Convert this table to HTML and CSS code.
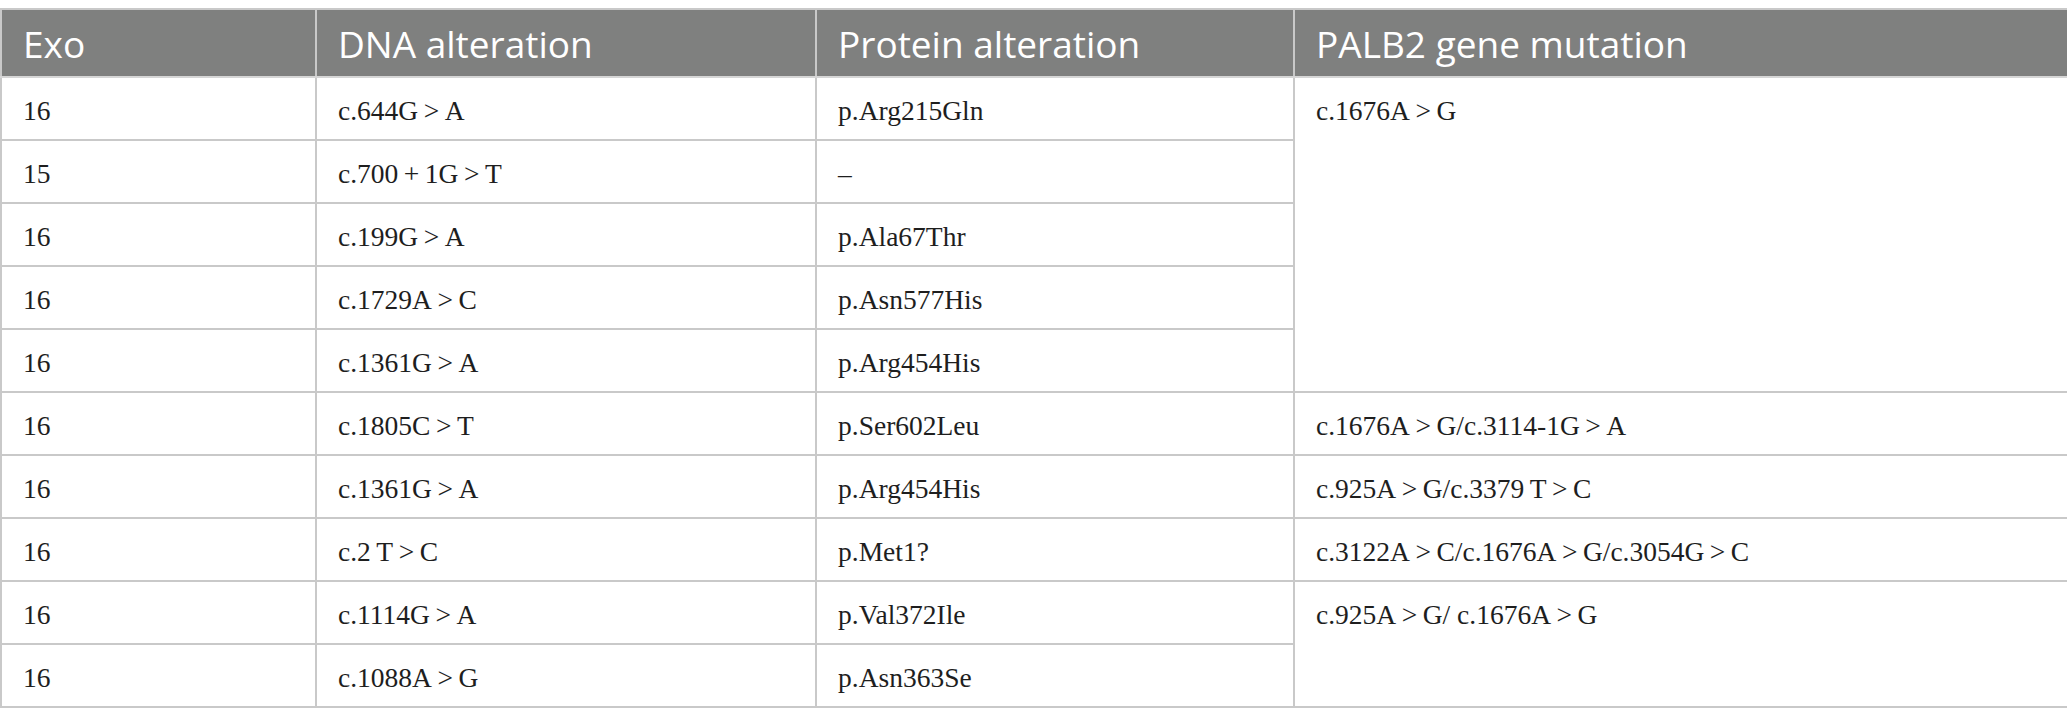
FILE: index.html
```html
<!DOCTYPE html>
<html lang="en">
<head>
<meta charset="utf-8">
<title>PALB2 mutations</title>
<link rel="stylesheet" href="styles.css">
</head>
<body>
<table class="data">
  <colgroup>
    <col class="c1"><col class="c2"><col class="c3"><col class="c4">
  </colgroup>
  <thead>
    <tr>
      <th>Exo</th>
      <th>DNA alteration</th>
      <th>Protein alteration</th>
      <th>PALB2 gene mutation</th>
    </tr>
  </thead>
  <tbody>
    <tr><td>16</td><td>c.644G&thinsp;&gt;&thinsp;A</td><td>p.Arg215Gln</td><td rowspan="5">c.1676A&thinsp;&gt;&thinsp;G</td></tr>
    <tr><td>15</td><td>c.700&thinsp;+&thinsp;1G&thinsp;&gt;&thinsp;T</td><td>–</td></tr>
    <tr><td>16</td><td>c.199G&thinsp;&gt;&thinsp;A</td><td>p.Ala67Thr</td></tr>
    <tr><td>16</td><td>c.1729A&thinsp;&gt;&thinsp;C</td><td>p.Asn577His</td></tr>
    <tr><td>16</td><td>c.1361G&thinsp;&gt;&thinsp;A</td><td>p.Arg454His</td></tr>
    <tr><td>16</td><td>c.1805C&thinsp;&gt;&thinsp;T</td><td>p.Ser602Leu</td><td>c.1676A&thinsp;&gt;&thinsp;G/c.3114-1G&thinsp;&gt;&thinsp;A</td></tr>
    <tr><td>16</td><td>c.1361G&thinsp;&gt;&thinsp;A</td><td>p.Arg454His</td><td>c.925A&thinsp;&gt;&thinsp;G/c.3379&thinsp;T&thinsp;&gt;&thinsp;C</td></tr>
    <tr><td>16</td><td>c.2&thinsp;T&thinsp;&gt;&thinsp;C</td><td>p.Met1?</td><td>c.3122A&thinsp;&gt;&thinsp;C/c.1676A&thinsp;&gt;&thinsp;G/c.3054G&thinsp;&gt;&thinsp;C</td></tr>
    <tr><td>16</td><td>c.1114G&thinsp;&gt;&thinsp;A</td><td>p.Val372Ile</td><td rowspan="2">c.925A&thinsp;&gt;&thinsp;G/ c.1676A&thinsp;&gt;&thinsp;G</td></tr>
    <tr><td>16</td><td>c.1088A&thinsp;&gt;&thinsp;G</td><td>p.Asn363Se</td></tr>
  </tbody>
</table>
</body>
</html>
```

FILE: styles.css
```css
html, body {
  margin: 0;
  padding: 0;
  background: #ffffff;
}
body {
  padding-top: 8px;
}
.data {
  width: 2067px;
  table-layout: fixed;
  border-collapse: collapse;
  border: 2px solid #c9c9c9;
}
.c1 { width: 315px; }
.c2 { width: 500px; }
.c3 { width: 478px; }
.c4 { width: 774px; }

.data th {
  background: #7f807f;
  color: #ffffff;
  font-family: "Open Sans", "Noto Sans", sans-serif;
  font-weight: 400;
  font-size: 37px;
  line-height: 40px;
  text-align: left;
  vertical-align: top;
  height: 68px;
  box-sizing: border-box;
  padding: 14px 20px 0 21px;
  border: 2px solid #c9c9c9;
  border-bottom-color: #d6d6d6;
  white-space: nowrap;
}
.data thead tr th + th {
  border-left-color: #9a9a9a;
}
.data td {
  font-family: "Liberation Serif", "Times New Roman", serif;
  font-size: 27.5px;
  line-height: 32px;
  color: #1e1e1e;
  vertical-align: top;
  height: 63px;
  box-sizing: border-box;
  padding: 17px 20px 0 21px;
  border: 2px solid #c9c9c9;
  white-space: nowrap;
}
```
